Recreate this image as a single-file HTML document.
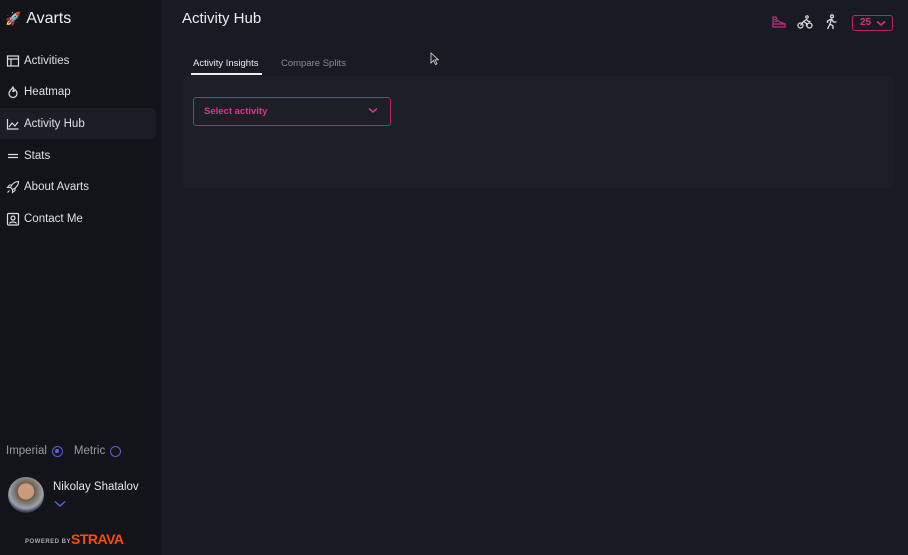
<!DOCTYPE html>
<html><head><meta charset="utf-8"><style>
*{box-sizing:border-box;margin:0;padding:0}
body{width:908px;height:555px;background:#181b22;font-family:"Liberation Sans",sans-serif;color:#e6e7ea;position:relative;overflow:hidden}
.side{position:absolute;left:0;top:0;width:162px;height:555px;background:#131419}
.logo{position:absolute;left:5px;top:10px;font-size:16px;color:#eee;display:flex;align-items:center;gap:5px}
.nav{position:absolute;left:0;width:156px;height:31px;display:flex;align-items:center;font-size:11.5px;color:#dfe0e3;padding-left:6px;border-radius:0 6px 6px 0}
.nav svg{margin-right:4px}
.nav.act{background:#1c1e25}
.units{position:absolute;left:6px;top:445px;font-size:11.5px;color:#9a9ca3;display:flex;align-items:center;gap:5px}
.rad{width:11px;height:11px;border:1.3px solid #5a5fe0;border-radius:50%;display:inline-block;position:relative;margin-right:6px}
.rad.on::after{content:"";position:absolute;left:2.5px;top:2.5px;width:3.5px;height:3.5px;background:#5a5fe0;border-radius:50%}
.avatar{position:absolute;left:8px;top:477px;width:36px;height:36px;border-radius:50%;background:radial-gradient(circle at 50% 40%,#c99a7c 0 28%,#6b5a4d 30%,#9aa3ab 60%,#27324a 75%)}
.name{position:absolute;left:53px;top:481px;font-size:11.5px;color:#e6e6e6}
.powered{position:absolute;left:25px;top:539px;font-size:6px;color:#aaa;letter-spacing:.5px;font-weight:bold}
.strava{position:absolute;left:71px;top:531px;font-size:14px;color:#fc4c02;font-weight:900;letter-spacing:-.5px}
h1{position:absolute;left:182px;top:10px;font-size:15px;font-weight:normal;color:#eee}
.tab{position:absolute;top:58px;font-size:9.5px}
.panel{position:absolute;left:182px;top:76px;width:711px;height:112px;background:#1c1f26;border-radius:4px}
.sel{position:absolute;left:193px;top:97px;width:198px;height:29px;border:1px solid #b8246c;border-radius:3px;color:#e0338a;font-size:9.5px;font-weight:bold;padding:8px 0 0 10px}
.num{position:absolute;left:852px;top:15px;width:41px;height:16px;border:1px solid #b8246c;border-radius:3px;color:#d4357f;font-size:10px;font-weight:bold;padding:1px 0 0 7px}
</style></head><body>
<div class="side">
<div class="logo"><span style="font-size:13px">🚀</span>Avarts</div>
<div class="nav" style="top:45px"><svg width="14" height="14" viewBox="0 0 14 14" fill="none" stroke="#ddd" stroke-width="1.2"><rect x="1.5" y="2" width="11" height="10"/><path d="M1.5 5h11M5 5v7"/></svg>Activities</div>
<div class="nav" style="top:76px"><svg width="14" height="14" viewBox="0 0 14 14" fill="none" stroke="#ddd" stroke-width="1.2"><path d="M7 1.5c0 2-4 4-4 7a4 4 0 008 0c0-2-1-3-2-4 0 1.5-1 2-2 2 1-2 0-4 0-5z"/></svg>Heatmap</div>
<div class="nav act" style="top:108px"><svg width="14" height="14" viewBox="0 0 14 14" fill="none" stroke="#ddd" stroke-width="1.2"><path d="M1.5 2v10h11M3 10l3-4 3 3 3-4"/></svg>Activity Hub</div>
<div class="nav" style="top:140px"><svg width="14" height="14" viewBox="0 0 14 14" fill="none" stroke="#ddd" stroke-width="1.2"><path d="M2 5.5h10M2 8.5h10"/></svg>Stats</div>
<div class="nav" style="top:171px"><svg width="14" height="14" viewBox="0 0 14 14" fill="none" stroke="#ddd" stroke-width="1.1"><path d="M12.5 1.5c-4 0-7 3-8 6l2 2c3-1 6-4 6-8zM4.5 7.5l-3 0 2-2.5h2.5M6.5 9.5v3l2.5-2v-2.5M3.5 10.5l-2 2"/></svg>About Avarts</div>
<div class="nav" style="top:203px"><svg width="14" height="14" viewBox="0 0 14 14" fill="none" stroke="#ddd" stroke-width="1.2"><rect x="1.5" y="1.5" width="11" height="11.5" rx="1"/><circle cx="7" cy="6" r="2"/><path d="M3.5 11.5c1-2 6-2 7 0"/></svg>Contact Me</div>
<div class="units">Imperial <span class="rad on"></span>Metric <span class="rad"></span></div>
<div class="avatar"></div>
<div class="name">Nikolay Shatalov</div>
<svg style="position:absolute;left:54px;top:500px" width="12" height="8" viewBox="0 0 12 8" fill="none" stroke="#5a5fe0" stroke-width="1.5"><path d="M1 1.5l5 4.5 5-4.5"/></svg>
<div class="powered">POWERED BY</div>
<div class="strava">STRAVA</div>
</div>
<h1>Activity Hub</h1>
<div class="tab" style="left:193px;color:#eee">Activity Insights</div>
<div style="position:absolute;left:191px;top:73px;width:71px;height:2px;background:#eee"></div>
<div class="tab" style="left:281px;color:#8a8c93">Compare Splits</div>
<div class="panel"></div>
<div class="sel">Select activity</div>
<svg style="position:absolute;left:368px;top:107px" width="10" height="7" viewBox="0 0 10 7" fill="none" stroke="#e0338a" stroke-width="1.5"><path d="M1 1.5l4 3.5 4-3.5"/></svg>
<svg style="position:absolute;left:771px;top:15px" width="16" height="15" viewBox="0 0 16 15" fill="none" stroke="#c42a78" stroke-width="1.3"><path d="M2 2h3l1 3 3 2 5 2v3H2zM2 9h12M3 4.5h2M3.5 6.5h3"/></svg>
<svg style="position:absolute;left:797px;top:15px" width="16" height="15" viewBox="0 0 16 15" fill="none" stroke="#ddd" stroke-width="1.2"><circle cx="3.5" cy="10.5" r="2.5"/><circle cx="12.5" cy="10.5" r="2.5"/><circle cx="10" cy="2" r="1.2"/><path d="M3.5 10.5l3-4 3 2v3M6.5 6.5l3-2 2 2h2"/></svg>
<svg style="position:absolute;left:824px;top:14px" width="14" height="16" viewBox="0 0 14 16" fill="none" stroke="#ddd" stroke-width="1.3"><circle cx="8" cy="2.3" r="1.5"/><path d="M7.5 5l-1.5 5-2.5 5M6 10l3 2v3M7.5 5l-4 2v2M7.5 5l2 3h3"/></svg>
<div class="num">25</div>
<svg style="position:absolute;left:876px;top:20px" width="10" height="7" viewBox="0 0 10 7" fill="none" stroke="#d4357f" stroke-width="1.5"><path d="M1 1.5l4 3.5 4-3.5"/></svg>
<svg style="position:absolute;left:430px;top:52px" width="9" height="13" viewBox="0 0 9 13"><path d="M1 1v10l2.5-2.5 2 4 1.5-.7-2-4h3.5z" fill="#222" stroke="#ddd" stroke-width=".8"/></svg>
</body></html>
